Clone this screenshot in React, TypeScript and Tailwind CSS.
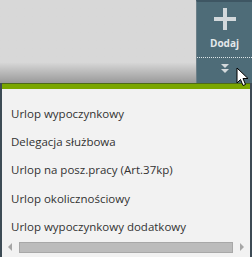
const items = [
  'Urlop wypoczynkowy',
  'Delegacja służbowa',
  'Urlop na posz.pracy (Art.37kp)',
  'Urlop okolicznościowy',
  'Urlop wypoczynkowy dodatkowy',
];

export default function App() {
  return (
    <div className="relative h-[257px] w-[252px] overflow-hidden bg-[#d6d6d6]" style={{ fontFamily: '"Open Sans", "Noto Sans", sans-serif' }}>
      <div className="flex h-[83px]">
        <div className="flex-1 bg-gradient-to-b from-[#d8d8d8] from-75% to-[#9a9a9a]" />
        <div className="flex w-[56px] flex-col border-l border-[#6c7f88] border-t-2 border-t-[#3e5663] bg-[#4e6c78]">
          <div className="flex h-[55px] flex-col items-center pt-[6px]">
            <svg width="22" height="22" viewBox="0 0 22 22">
              <rect x="9" y="0" width="4" height="22" fill="#d3d9dc" />
              <rect x="0" y="9" width="22" height="4" fill="#d3d9dc" />
            </svg>
            <span className="mt-[8px] text-[10px] font-bold leading-none text-[#e4e8ea]">Dodaj</span>
          </div>
          <div className="border-t border-dotted border-[#dfe6e9]" />
          <div className="flex flex-1 flex-col items-center pt-[6px]">
            <svg width="10" height="10" viewBox="0 0 10 10">
              <polygon points="1,0 9,0 5,4" fill="#d3d9dc" />
              <polygon points="1,5 9,5 5,9" fill="#d3d9dc" />
            </svg>
          </div>
        </div>
      </div>
      <div className="flex h-[174px] flex-col border-x-2 border-[#3d4b55] bg-[#f2f2f2]">
        <div className="h-[6px] border-t border-[#4d6a1a] bg-[#7aa600]" />
        <div className="flex flex-col pt-[10px]">
          {items.map((item) => (
            <div key={item} className="flex h-[28.4px] items-center pl-[9px] text-[11.5px] text-[#333333]">
              {item}
            </div>
          ))}
        </div>
        <div className="mt-auto mb-[4px] flex h-[12px] items-center gap-[6px] px-[5px]">
          <svg width="6" height="8" viewBox="0 0 6 8">
            <polygon points="5,0 5,8 1,4" fill="#a6a6a6" />
          </svg>
          <div className="h-[11px] flex-1 border border-[#a8a8a8] bg-[#bcbcbc]" />
          <svg width="6" height="8" viewBox="0 0 6 8">
            <polygon points="1,0 1,8 5,4" fill="#a6a6a6" />
          </svg>
        </div>
      </div>
      <svg className="absolute left-[236px] top-[67px]" width="13" height="20" viewBox="0 0 13 20">
        <path d="M1 1 L1 16 L4.5 12.5 L7 18.5 L9.5 17.5 L7 11.5 L12 11.5 Z" fill="#ffffff" stroke="#000000" strokeWidth="1" strokeLinejoin="miter" />
      </svg>
    </div>
  );
}
